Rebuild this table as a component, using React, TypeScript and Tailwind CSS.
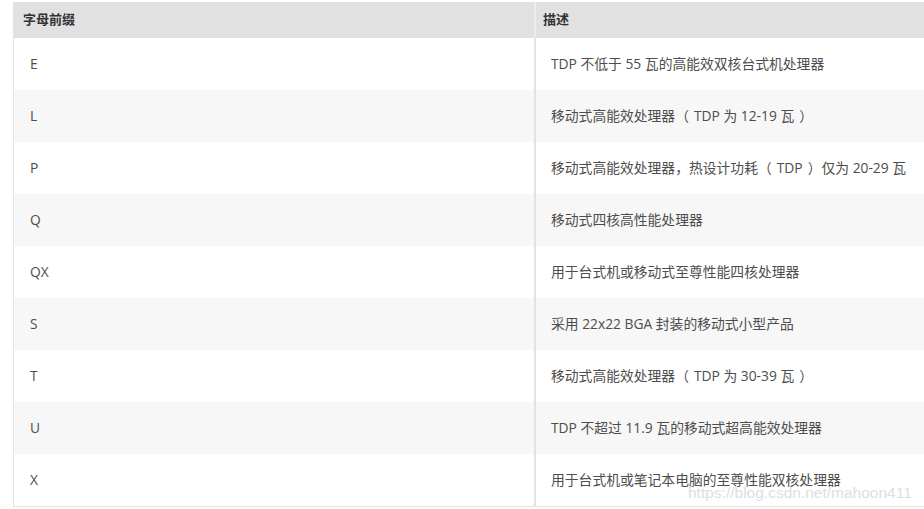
import type { ReactNode } from "react";

const rows: [string, string][] = [
  ["E", "TDP 不低于 55 瓦的高能效双核台式机处理器"],
  ["L", "移动式高能效处理器（TDP 为 12-19 瓦）"],
  ["P", "移动式高能效处理器，热设计功耗（TDP）仅为 20-29 瓦"],
  ["Q", "移动式四核高性能处理器"],
  ["QX", "用于台式机或移动式至尊性能四核处理器"],
  ["S", "采用 22x22 BGA 封装的移动式小型产品"],
  ["T", "移动式高能效处理器（TDP 为 30-39 瓦）"],
  ["U", "TDP 不超过 11.9 瓦的移动式超高能效处理器"],
  ["X", "用于台式机或笔记本电脑的至尊性能双核处理器"],
];

// fullwidth parens sit centred in the reference font, so pad them a bit
function Desc({ text }: { text: string }) {
  const parts: ReactNode[] = [];
  text.split(/([（）])/).forEach((p, i) => {
    if (p === "（") parts.push(<span key={i} className="mr-[5px]">（</span>);
    else if (p === "）") parts.push(<span key={i} className="ml-[5px]">）</span>);
    else if (p) parts.push(p);
  });
  return <>{parts}</>;
}

export default function App() {
  return (
    <div className="w-[924px] h-[509px] bg-white overflow-hidden relative font-['Open_Sans','Noto_Sans_CJK_SC',sans-serif]">
      <div className="ml-[13px] mt-[2px] w-[920px] border-l border-b border-[#e3e3e3]">
        <div className="flex h-9 bg-[#e1e1e1] text-[13px] font-bold text-[#333]">
          <div className="w-[520px] pl-[9px] flex items-center">字母前缀</div>
          <div className="flex-1 border-l-2 border-[#ececec] pl-[7px] flex items-center">描述</div>
        </div>
        {rows.map(([k, v], i) => (
          <div
            key={k}
            className={`flex h-[52px] text-[13.8px] text-[#4d4d4d] ${i % 2 === 1 ? "bg-[#f7f7f7]" : "bg-white"}`}
          >
            <div className="w-[520px] pl-[16px] flex items-center">{k}</div>
            <div className="flex-1 border-l-2 border-[#e3e3e3] pl-[15px] flex items-center">
              <Desc text={v} />
            </div>
          </div>
        ))}
      </div>
      <div className="absolute left-[688px] top-[481px] text-[15.5px] text-[#dedede] font-['Liberation_Sans',sans-serif]">
        https://blog.csdn.net/mahoon411
      </div>
    </div>
  );
}
